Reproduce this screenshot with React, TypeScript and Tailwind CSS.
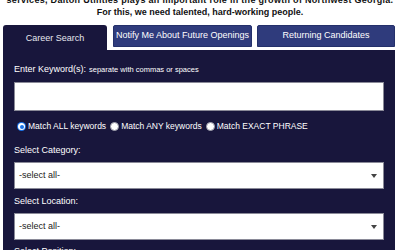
import React from 'react';

const font = "font-['Liberation_Sans',Arial,sans-serif]";

const Radio: React.FC<{ checked?: boolean; label: string }> = ({ checked, label }) => (
  <label className="flex items-center gap-[2px]">
    {checked ? (
      <span className="flex h-[9px] w-[9px] items-center justify-center rounded-full bg-[#1a73e8]">
        <span className="flex h-[7px] w-[7px] items-center justify-center rounded-full bg-white">
          <span className="h-[4px] w-[4px] rounded-full bg-[#1a73e8]" />
        </span>
      </span>
    ) : (
      <span className="h-[9px] w-[9px] rounded-full border border-[#9a9aa8] bg-white" />
    )}
    <span>{label}</span>
  </label>
);

const FakeSelect: React.FC = () => (
  <div className="flex h-[27px] items-center justify-between border border-[#8a8a98] bg-white pl-[4px] pr-[6px] text-[9px] text-[#222]">
    <span>-select all-</span>
    <svg width="6" height="4" viewBox="0 0 6 4">
      <path d="M0 0 L6 0 L3 4 Z" fill="#444" />
    </svg>
  </div>
);

export default function App() {
  return (
    <div className={`${font} h-[250px] w-[400px] overflow-hidden bg-white`}>
      <div className="-mt-[6px] text-center text-[9px] font-bold leading-[12px] text-[#111]">
        <p className="whitespace-nowrap tracking-[0.3px]">
          services, Dalton Utilities plays an important role in the growth of Northwest Georgia.
        </p>
        <p>For this, we need talented, hard-working people.</p>
      </div>

      <div className="mt-[7px] flex items-start px-[3px]">
        <div className="flex h-[25px] w-[104px] items-center justify-center rounded-t-[3px] bg-[#18163c] pt-[3px] text-[9px] text-[#e6e6ee]">
          Career Search
        </div>
        <div className="ml-[6px] flex h-[22px] w-[139px] items-center justify-center rounded-t-[2px] border border-[#24306a] bg-[#2f3b7c] text-[9px] text-white">
          Notify Me About Future Openings
        </div>
        <div className="ml-[5px] flex h-[22px] w-[138px] items-center justify-center rounded-t-[2px] border border-[#24306a] bg-[#2f3b7c] text-[9px] text-white">
          Returning Candidates
        </div>
      </div>

      <div className="mx-[3px] w-[392px] bg-[#18163c] px-[11px] pt-[14px] text-[9px] text-white">
        <div className="flex items-baseline leading-[11px]">
          <span>Enter Keyword(s):</span>
          <span className="ml-[3px] text-[7.5px]">separate with commas or spaces</span>
        </div>
        <input
          type="text"
          className="mt-[7px] block h-[29px] w-full border border-[#8a8a98] bg-white outline-none"
        />
        <div className="mt-[10px] flex items-center gap-[4px] pl-[3px] text-[8.5px] leading-[11px]">
          <Radio checked label="Match ALL keywords" />
          <Radio label="Match ANY keywords" />
          <Radio label="Match EXACT PHRASE" />
        </div>
        <div className="mt-[13px] leading-[11px]">Select Category:</div>
        <div className="mt-[6px]">
          <FakeSelect />
        </div>
        <div className="mt-[7px] leading-[11px]">Select Location:</div>
        <div className="mt-[6px]">
          <FakeSelect />
        </div>
        <div className="mt-[6px] leading-[11px]">Select Position:</div>
        <div className="h-[40px]" />
      </div>
    </div>
  );
}
